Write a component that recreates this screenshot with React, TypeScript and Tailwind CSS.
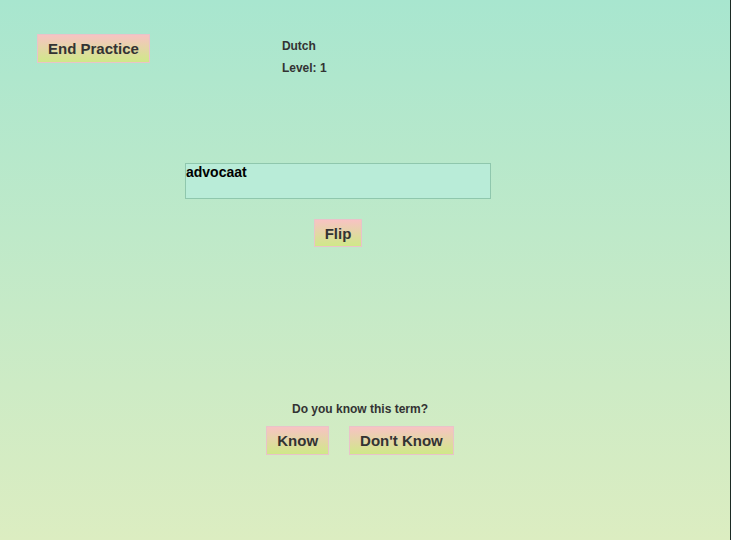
import React from "react";

const btn =
  "border border-[#e9c3c9] bg-[linear-gradient(to_bottom,#f8c3c3,#cfe988)] px-[10px] py-[4px] text-[15px] leading-[19px] font-bold text-[#333]";

export default function App() {
  return (
    <div
      className="min-h-[540px] w-full border-r border-[#1d2b25] bg-[linear-gradient(to_bottom,#a8e6cf,#dcedc1)] text-[#333]"
      style={{ fontFamily: '"Liberation Sans", Arial, sans-serif' }}
    >
      {/* top bar */}
      <div className="flex pt-[34px]">
        <button className={`${btn} ml-[37px] h-[29px]`}>End Practice</button>
        <div className="ml-[132px] mt-[1px] text-[12px] leading-[22px] font-bold">
          <div>Dutch</div>
          <div>Level: 1</div>
        </div>
      </div>

      {/* card */}
      <div className="ml-[185px] mt-[84px] flex w-[306px] flex-col items-center">
        <div className="h-[36px] w-full border border-[#8fc7ad] bg-[#b9ecd8] text-[14px] leading-[17px] font-bold text-black">
          advocaat
        </div>
        <button className={`${btn} mt-[20px] h-[28px]`}>Flip</button>
      </div>

      {/* answer */}
      <div className="mt-[153px] flex w-[720px] flex-col items-center">
        <div className="text-[12px] leading-[18px] font-bold">Do you know this term?</div>
        <div className="mt-[8px] flex gap-[20px]">
          <button className={`${btn} h-[29px]`}>Know</button>
          <button className={`${btn} h-[29px]`}>Don't Know</button>
        </div>
      </div>
    </div>
  );
}
